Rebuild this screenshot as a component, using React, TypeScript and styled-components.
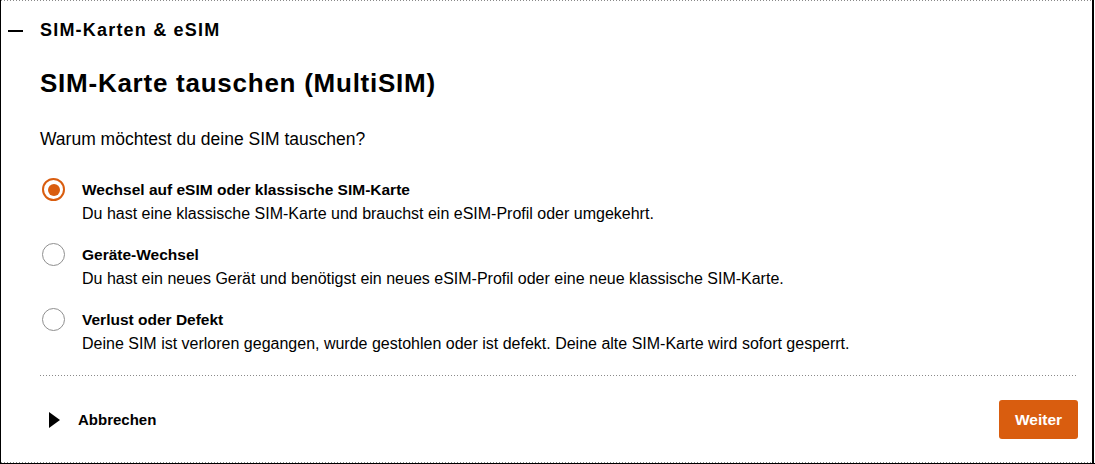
import React, { useState } from "react";
import styled, { createGlobalStyle } from "styled-components";

const Global = createGlobalStyle`
  html, body { margin: 0; padding: 0; background: #fff; }
  body { font-family: "Liberation Sans", Arial, sans-serif; color: #000; }
  * { box-sizing: border-box; }
`;

const Frame = styled.div`
  width: 1095px;
  height: 464px;
  border-left: 1px solid #000;
  border-bottom: 1px solid #000;
  padding-right: 1px;
  display: flex;
`;

const Panel = styled.section`
  flex: 1;
  display: flex;
  flex-direction: column;
  border-right: 2px solid #000;
  background-image:
    repeating-linear-gradient(to right, #8a8a8a 0 1px, transparent 1px 3px),
    repeating-linear-gradient(to right, #8a8a8a 0 1px, transparent 1px 3px);
  background-size: 100% 1px, 100% 1px;
  background-position: top left, bottom left;
  background-repeat: no-repeat;
`;

const Header = styled.div`
  display: flex;
  align-items: center;
  height: 60px;
  padding-left: 7px;
  gap: 17px;
  padding-top: 1px;
`;

const Minus = styled.span`
  width: 15px;
  height: 2px;
  background: #000;
`;

const HeaderTitle = styled.h2`
  margin: 0;
  font-size: 18px;
  font-weight: 700;
  letter-spacing: 1.2px;
`;

const Body = styled.div`
  padding: 7px 14px 0 39px;
  display: flex;
  flex-direction: column;
  flex: 1;
`;

const Title = styled.h1`
  margin: 0;
  font-size: 26px;
  font-weight: 700;
  line-height: 32px;
  letter-spacing: 0.75px;
`;

const Question = styled.p`
  margin: 29px 0 0;
  font-size: 17.5px;
  line-height: 22px;
`;

const Options = styled.div`
  margin-top: 28px;
  display: flex;
  flex-direction: column;
  gap: 17px;
`;

const Option = styled.label`
  display: flex;
  align-items: flex-start;
  gap: 17px;
  cursor: pointer;
`;

const Radio = styled.span<{ $checked: boolean }>`
  flex: none;
  width: 23px;
  height: 23px;
  margin-left: 2px;
  border-radius: 50%;
  border: ${(p) => (p.$checked ? "2px solid #d95d0f" : "1px solid #8f8f8f")};
  display: flex;
  align-items: center;
  justify-content: center;
  &::after {
    content: "";
    width: 12px;
    height: 12px;
    border-radius: 50%;
    background: ${(p) => (p.$checked ? "#d95d0f" : "transparent")};
  }
`;

const OptionText = styled.span`
  display: flex;
  flex-direction: column;
`;

const OptionLabel = styled.span`
  font-size: 15.5px;
  font-weight: 700;
  line-height: 24px;
`;

const OptionDesc = styled.span`
  font-size: 16px;
  line-height: 24px;
`;

const Divider = styled.hr`
  margin: 19px 0 0;
  border: 0;
  height: 1px;
  background: repeating-linear-gradient(to right, #8a8a8a 0 1px, transparent 1px 3px);
`;

const Footer = styled.div`
  display: flex;
  align-items: center;
  justify-content: space-between;
  padding: 24px 0 0 9px;
`;

const Cancel = styled.button`
  display: flex;
  align-items: center;
  gap: 18px;
  border: 0;
  background: none;
  padding: 0;
  font-family: inherit;
  font-size: 15px;
  font-weight: 700;
  color: #000;
  cursor: pointer;
`;

const Next = styled.button`
  width: 79px;
  height: 39px;
  border: 0;
  border-radius: 3px;
  background: #d95d0f;
  color: #fff;
  font-family: inherit;
  font-size: 15.5px;
  font-weight: 700;
  cursor: pointer;
`;

const options = [
  {
    label: "Wechsel auf eSIM oder klassische SIM-Karte",
    desc: "Du hast eine klassische SIM-Karte und brauchst ein eSIM-Profil oder umgekehrt.",
  },
  {
    label: "Geräte-Wechsel",
    desc: "Du hast ein neues Gerät und benötigst ein neues eSIM-Profil oder eine neue klassische SIM-Karte.",
  },
  {
    label: "Verlust oder Defekt",
    desc: "Deine SIM ist verloren gegangen, wurde gestohlen oder ist defekt. Deine alte SIM-Karte wird sofort gesperrt.",
  },
];

export default function App() {
  const [sel, setSel] = useState(0);
  return (
    <>
      <Global />
      <Frame>
        <Panel>
          <Header>
            <Minus />
            <HeaderTitle>SIM-Karten &amp; eSIM</HeaderTitle>
          </Header>
          <Body>
            <Title>SIM-Karte tauschen (MultiSIM)</Title>
            <Question>Warum möchtest du deine SIM tauschen?</Question>
            <Options>
              {options.map((o, i) => (
                <Option key={i} onClick={() => setSel(i)}>
                  <Radio $checked={sel === i} />
                  <OptionText>
                    <OptionLabel>{o.label}</OptionLabel>
                    <OptionDesc>{o.desc}</OptionDesc>
                  </OptionText>
                </Option>
              ))}
            </Options>
            <Divider />
            <Footer>
              <Cancel>
                <svg width="11" height="16" viewBox="0 0 11 16">
                  <path d="M0 0 L11 8 L0 16 Z" fill="#000" />
                </svg>
                Abbrechen
              </Cancel>
              <Next>Weiter</Next>
            </Footer>
          </Body>
        </Panel>
      </Frame>
    </>
  );
}
